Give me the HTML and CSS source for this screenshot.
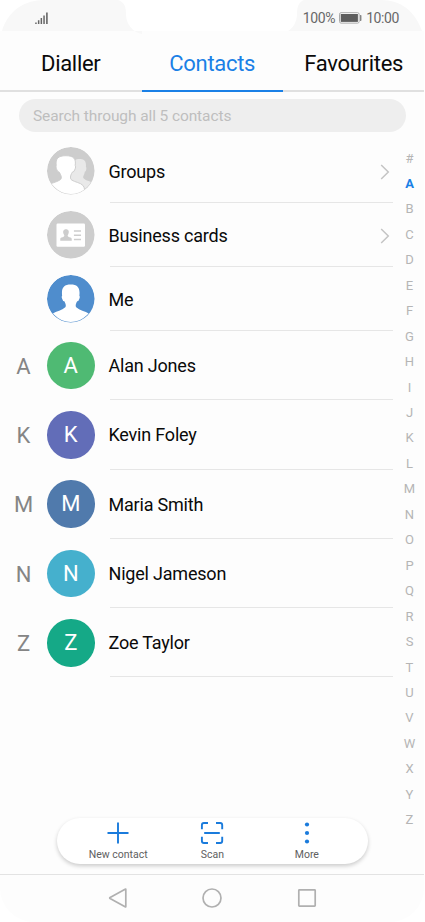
FILE: index.html
```html
<!DOCTYPE html>
<html lang="en">
<head>
<meta charset="utf-8">
<title>Contacts</title>
<link rel="stylesheet" href="styles.css">
</head>
<body>
<div class="phone">
  <header class="status">
    <svg class="status-shape" width="425" height="35" viewBox="0 0 425 35">
      <path fill="#f8f8f8" d="M2 31C8 11 24 0 44 0H118C124 2 126 6 126 14C126 24 132 31 142 35V31ZM422 31C415 11 401 0 381 0H304C299 2 297 6 297 14C297 22 293 28 288 31Z"/>
      <path fill="#fdfdfd" d="M0 31H134C139 34 145 35 152 35H272C279 35 286 34 290 31H424V35H0Z"/>
    </svg>
    <svg class="signal" width="14" height="13" viewBox="0 0 14 13" fill="#666">
      <path d="M.2 10.600h1.500v1.500H.2zM2.900 8.300h1.500v3.800H2.900zM5.600 6h1.500v6.100H5.600zM8.300 3.500h1.500v8.600H8.300zM11.100 .5h1.600v11.600h-1.600z"/>
    </svg>
    <div class="status-right">
      <span>100%</span>
      <svg width="23" height="12" viewBox="0 0 23 12">
        <rect x=".5" y=".7" width="19.600" height="10.400" rx="1.500" fill="#fff" stroke="#aaa"/>
        <rect x="1.700" y="2" width="17.200" height="7.900" fill="#5d5d5d"/>
        <path fill="#777" d="M21.100 3h.6q.7 0 .7.7v4.500q0 .7-.7.7h-.6z"/>
      </svg>
      <span>10:00</span>
    </div>
  </header>
  <nav class="tabs">
    <a class="tab">Dialler</a>
    <a class="tab tab-active">Contacts</a>
    <a class="tab">Favourites</a>
  </nav>
  <div class="search">Search through all 5 contacts</div>
  <main class="content">
    <ul class="list">
      <li class="row">
        <span class="section"></span>
        <svg class="avatar" viewBox="0 0 48 48">
          <defs><clipPath id="disc"><circle cx="24" cy="24" r="23.400"/></clipPath></defs>
          <circle cx="24" cy="24" r="24" fill="#cdcdcd"/>
          <g clip-path="url(#disc)">
            <path fill="#e9e9e9" d="M27 14C29 12.500 31 12.200 34 12.200C38 12.300 39.800 15 39.300 20Q40.200 21 39.500 23.500Q39.200 25 38.200 25C37.800 28 36.500 29 36.500 30.500C36.500 33 42 34 46 36V48H24V20Z"/>
            <path fill="#fff" stroke="#cdcdcd" d="M13 33.400C15.500 32 14.500 29 12.500 25.500Q10.500 25.500 9.500 22Q8.800 20 9.300 18.500C8.500 12 11 8.800 19 8.800C27 8.800 29.500 12 28.500 18.500Q29.300 20 28.500 22Q27.500 25.500 25.500 25.500C23.500 29 23 32 25 33.400C28 35.500 34 36 36.500 39C38 41 38.500 45 38.500 49H-2V41C2 36.500 9 36 13 33.400Z"/>
          </g>
        </svg>
        <div class="label">Groups<svg class="chevron" width="10" height="16" viewBox="0 0 10 16"><path d="M1.200 1L8.300 8L1.200 15"/></svg></div>
      </li>
      <li class="row">
        <span class="section"></span>
        <svg class="avatar" viewBox="0 0 48 48">
          <circle cx="24" cy="24" r="24" fill="#cdcdcd"/>
          <rect x="9.600" y="12.700" width="28.800" height="23.400" rx="1.200" fill="#fff"/>
          <path fill="#cdcdcd" d="M13.400 30v-1.800c0-1.300 2-1.300 3.700-2.400.8-.5.3-1.500-.2-2.300-1.200-2.500-.5-5 2.300-5s3.500 2.500 2.300 5c-.5.800-1 1.800-.2 2.300 1.700 1.100 3.700 1.100 3.700 2.400V30z"/>
          <path stroke="#cdcdcd" stroke-width="1.500" d="M27.200 20.200h7.200M27.200 24.500h7.200M27.200 28.900h7.200"/>
        </svg>
        <div class="label">Business cards<svg class="chevron" width="10" height="16" viewBox="0 0 10 16"><path d="M1.200 1L8.300 8L1.200 15"/></svg></div>
      </li>
      <li class="row">
        <span class="section"></span>
        <svg class="avatar" viewBox="0 0 48 48">
          <circle cx="24" cy="24" r="24" fill="#4f8dcd"/>
          <path fill="#fff" clip-path="url(#disc)" d="M18.500 32.700C19.300 31.500 19.300 29.500 17.500 26.500Q15.900 26.500 15.200 23.800Q14.500 22 15.300 21C14.300 13 17 9.600 24 9.600C31 9.600 33.700 13 32.700 21Q33.500 22 32.800 23.800Q32.100 26.500 30.500 26.500C28.700 29.500 28.700 31.500 29.500 32.700C33 35.800 38 36.500 43 39.500V48H5V39.500C10 36.500 15 35.800 18.500 32.700Z"/>
        </svg>
        <div class="label">Me</div>
      </li>
      <li class="row contact"><span class="section">A</span><span class="avatar green">A</span><div class="label">Alan Jones</div></li>
      <li class="row contact"><span class="section">K</span><span class="avatar indigo">K</span><div class="label">Kevin Foley</div></li>
      <li class="row contact"><span class="section">M</span><span class="avatar blue">M</span><div class="label">Maria Smith</div></li>
      <li class="row contact"><span class="section">N</span><span class="avatar cyan">N</span><div class="label">Nigel Jameson</div></li>
      <li class="row contact"><span class="section">Z</span><span class="avatar teal">Z</span><div class="label">Zoe Taylor</div></li>
    </ul>
    <div class="index">
      <span>#</span><span class="current">A</span><span>B</span><span>C</span><span>D</span><span>E</span><span>F</span><span>G</span><span>H</span><span>I</span><span>J</span><span>K</span><span>L</span><span>M</span><span>N</span><span>O</span><span>P</span><span>Q</span><span>R</span><span>S</span><span>T</span><span>U</span><span>V</span><span>W</span><span>X</span><span>Y</span><span>Z</span>
    </div>
    <div class="toolbar">
      <div class="action">
        <svg width="24" height="24" viewBox="0 0 24 24"><path d="M12 1.500v21M1.500 12h21"/></svg>
        <span>New contact</span>
      </div>
      <div class="action">
        <svg width="24" height="24" viewBox="0 0 24 24"><path d="M1.900 8.200V4q0-2 2-2H8M16 2h4.200q2 0 2 2v4.200M22.200 15.800V20q0 2-2 2H16M8 22H3.900q-2 0-2-2v-4.200M4.200 12h15.600"/></svg>
        <span>Scan</span>
      </div>
      <div class="action">
        <svg class="dots" width="24" height="24" viewBox="0 0 24 24"><circle cx="12" cy="3.500" r="2.100"/><circle cx="12" cy="12" r="2.100"/><circle cx="12" cy="20.500" r="2.100"/></svg>
        <span>More</span>
      </div>
    </div>
  </main>
  <footer class="navbar">
    <svg width="22" height="22" viewBox="0 0 22 22"><path d="M18.800 2.600v16.800q0 .8-.7.4L3.100 11.500q-.8-.5 0-1L18.100 2.200q.7-.4.7.4Z"/></svg>
    <svg width="22" height="22" viewBox="0 0 22 22"><circle cx="11" cy="11" r="9"/></svg>
    <svg width="22" height="22" viewBox="0 0 22 22"><rect x="2.800" y="2.800" width="16.400" height="16.400" rx=".6"/></svg>
  </footer>
</div>
</body>
</html>
```
FILE: styles.css
```css
* { box-sizing: border-box; }
body {
  margin: 0;
  background: #fff;
  font-family: Roboto, "Liberation Sans", sans-serif;
  color: #0a0a0a;
}
.phone {
  width: 424px;
  height: 922px;
  display: flex;
  flex-direction: column;
  background: #fdfdfd;
  border-radius: 0 0 34px 34px;
}
.status {
  position: relative;
  height: 31px;
  flex: none;
  display: flex;
  justify-content: space-between;
  align-items: center;
  padding: 5px 25px 0 35px;
  background: #fff;
}
.status-shape { position: absolute; top: 0; left: 0; }
.signal { position: relative; }
.status-right {
  position: relative;
  display: flex;
  align-items: center;
  gap: 4px;
  font-size: 14px;
  line-height: 16px;
  letter-spacing: -.4px;
  color: #686868;
}
.tabs {
  position: relative;
  flex: none;
  height: 61px;
  display: grid;
  grid-template-columns: repeat(3, 141.500px);
  border-bottom: 2px solid #e0e0e0;
}
.tab {
  height: 61px;
  padding-top: 4px;
  text-align: center;
  font-size: 22px;
  line-height: 58px;
  letter-spacing: -.3px;
}
.tab-active { color: #1a80e6; border-bottom: 2px solid #1a80e6; }
.search {
  flex: none;
  height: 33px;
  margin: 7px 18px 0 19px;
  padding: 1px 14px 0;
  border-radius: 17px;
  background: #eee;
  color: #bebebe;
  font-size: 15.500px;
  line-height: 33px;
  letter-spacing: -.1px;
}
.content {
  position: relative;
  flex: 1;
  display: flex;
  padding-top: 7px;
}
.list { margin: 0; padding: 0; width: 393px; list-style: none; }
.row { display: flex; height: 64px; }
.contact { height: 69.300px; }
.section {
  width: 47px;
  padding-top: 2px;
  text-align: center;
  align-self: center;
  font-size: 22px;
  line-height: 28px;
  color: #858585;
}
.avatar {
  flex: none;
  width: 47.500px;
  height: 47.500px;
  align-self: center;
  border-radius: 50%;
  text-align: center;
  font-size: 22px;
  line-height: 48px;
  color: #fff;
}
.green { background: #4fba73; }
.indigo { background: #626db8; }
.blue { background: #507aac; }
.cyan { background: #45b0cd; }
.teal { background: #15a987; }
.label {
  flex: 1;
  display: flex;
  align-items: center;
  justify-content: space-between;
  margin-left: 15px;
  padding: 2px 3px 0 0;
  border-bottom: 1px solid #e6e6e6;
  font-size: 18px;
  letter-spacing: -.2px;
  text-indent: -1px;
}
.contact .label { padding-top: 1px; }
.chevron { fill: none; stroke: #c4c4c4; stroke-width: 1.500; }
.index {
  flex: 1;
  display: flex;
  flex-direction: column;
  padding: 6.500px 0 0 2px;
  text-align: center;
  font-size: 13px;
  line-height: 25.450px;
  color: #b5b5b5;
}
.current { color: #1a80e6; font-weight: 700; }
.toolbar {
  position: absolute;
  left: 57px;
  bottom: 10px;
  width: 311px;
  height: 46px;
  padding: 0 14px;
  display: grid;
  grid-template-columns: repeat(3, 1fr);
  border-radius: 23px;
  background: #fff;
  box-shadow: 0 2px 4px rgba(0, 0, 0, .2);
}
.action {
  display: flex;
  flex-direction: column;
  align-items: center;
  padding-top: 3px;
  font-size: 10.500px;
  line-height: 19px;
  color: #606060;
}
.action svg { flex: none; fill: none; stroke: #1a7bdc; stroke-width: 1.900; }
.action .dots { fill: #1a7bdc; stroke: none; }
.navbar {
  flex: none;
  height: 48px;
  padding-bottom: 1px;
  display: grid;
  grid-template-columns: repeat(3, 94.500px);
  justify-content: center;
  justify-items: center;
  align-items: center;
  border-top: 1px solid #e3e3e3;
}
.navbar svg { fill: none; stroke: #b0b0b0; stroke-width: 1.700; }
```
